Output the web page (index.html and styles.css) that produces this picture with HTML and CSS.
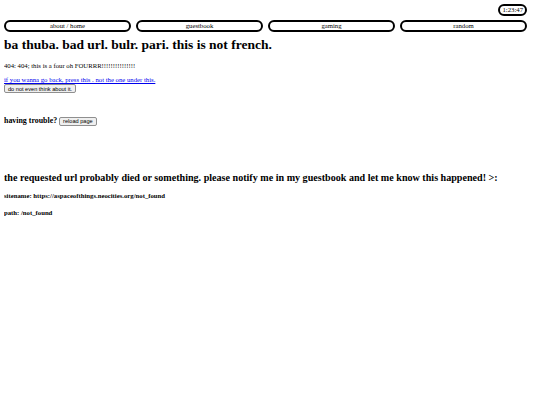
FILE: index.html
```html
<!DOCTYPE html>
<html>
<head>
<meta charset="utf-8">
<link rel="stylesheet" href="styles.css">
</head>
<body>
<div class="top">
  <span class="clock">1:23:47</span>
</div>
<nav class="nav">
  <a class="pill">about / home</a>
  <a class="pill">guestbook</a>
  <a class="pill">gaming</a>
  <a class="pill">random</a>
</nav>
<h1 class="title">ba thuba. bad url. bulr. pari. this is not french.</h1>
<p class="text">404: 404; this is a four oh FOURRR!!!!!!!!!!!!!!!</p>
<p class="text back"><a class="link" href="#">if you wanna go back, press this . not the one under this.</a><br><button class="btn">do not even think about it.</button></p>
<h3 class="trouble">having trouble? <button class="btn">reload page</button></h3>
<h2 class="notice">the requested url probably died or something. please notify me in my guestbook and let me know this happened! &gt;:</h2>
<h4 class="info first">sitename: https://aspaceofthings.neocities.org/not_found</h4>
<h4 class="info">path: /not_found</h4>
</body>
</html>
```
FILE: styles.css
```css
html, body {
  background: #fff;
}
body {
  margin: 4px;
  font-family: "Liberation Serif", "Times New Roman", serif;
  font-size: 6.72px;
  color: #000;
}
.top {
  display: flex;
  justify-content: flex-end;
  padding-right: 9px;
  height: 12px;
}
.clock {
  border: 2px solid #000;
  border-radius: 6px;
  line-height: 7.5px;
  padding: 0 2px;
}
.nav {
  display: flex;
  gap: 5px;
  margin-top: 4px;
  padding-right: 9px;
}
.pill {
  flex: 1;
  border: 2px solid #000;
  border-radius: 6px;
  text-align: center;
  line-height: 8px;
}
.title {
  font-size: 13.5px;
  line-height: 16px;
  margin: 5px 0 0;
}
.text {
  margin: 9px 0 0;
  line-height: 8px;
}
.back {
  margin-top: 6px;
}
.link {
  color: #0000ee;
}
.btn {
  font-family: "Liberation Sans", Arial, sans-serif;
  font-size: 5.6px;
  line-height: 6px;
  height: 9px;
  padding: 0 3px;
  margin: 0;
  background: #efefef;
  border: 1px solid #8f8f8f;
  border-radius: 2px;
  color: #000;
  vertical-align: middle;
}
.trouble {
  font-size: 7.9px;
  line-height: 10px;
  margin: 23px 0 0;
}
.notice {
  font-size: 10.1px;
  line-height: 12px;
  margin: 46px 0 0;
}
.info {
  font-size: 6.72px;
  line-height: 8px;
  margin: 9px 0 0;
}
.info.first {
  margin-top: 8px;
}
```
